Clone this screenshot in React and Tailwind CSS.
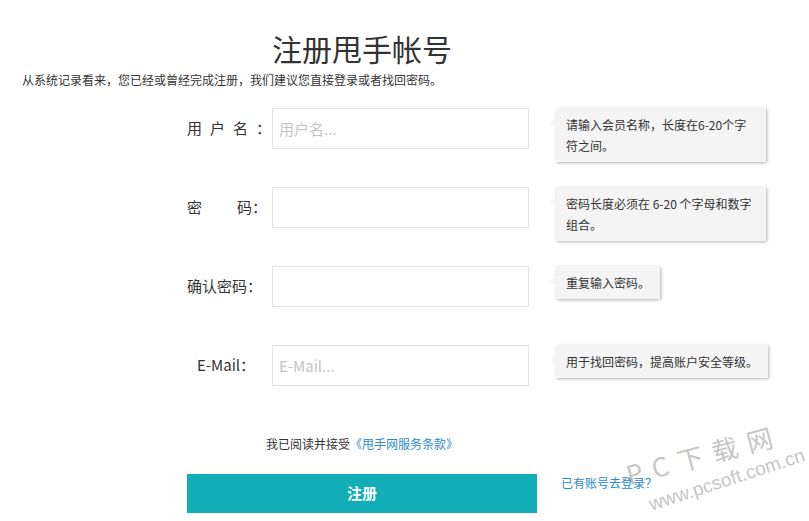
import React from 'react';

const font = { fontFamily: '"Noto Sans CJK SC", "Noto Sans", sans-serif' };

function Tip({ children, className = '' }) {
  return (
    <div className={`relative ml-[27px] bg-[#f4f4f4] px-[10px] py-[6px] text-[12px] leading-[21px] text-[#333] whitespace-nowrap shadow-[1px_1px_3px_rgba(0,0,0,0.3)] ${className}`}>
      {/* little arrow on the left */}
      <span className="absolute left-[-6px] top-[10px] h-0 w-0 border-y-[5px] border-r-[6px] border-y-transparent border-r-[#f4f4f4]" />
      {children}
    </div>
  );
}

function Row({ label, placeholder, type = 'text', tip, labelClass = '' }) {
  return (
    <div className="flex h-[41px] items-start">
      <div className={`flex h-[41px] w-[85px] items-center whitespace-nowrap text-[15px] text-[#333] ${labelClass}`}>{label}</div>
      <input
        type={type}
        placeholder={placeholder}
        className="h-[41px] w-[257px] border border-[#e3e3e3] bg-white px-[6px] text-[15px] text-[#333] outline-none placeholder:text-[#c4c4c4]"
      />
      {tip}
    </div>
  );
}

export default function App() {
  return (
    <div className="relative min-h-screen w-[809px] overflow-hidden bg-white" style={font}>
      {/* Title */}
      <div className="ml-[187px] mt-[30px] w-[350px] text-center text-[30px] leading-[36px] text-[#333]">
        注册甩手帐号
      </div>
      <p className="ml-[22px] mt-[6px] text-[12px] leading-[16px] text-[#333]">
        从系统记录看来，您已经或曾经完成注册，我们建议您直接登录或者找回密码。
      </p>

      {/* Form rows */}
      <div className="ml-[187px] mt-[20px] flex flex-col gap-[38px]">
        <Row
          label={<span className="tracking-[8px]">用户名：</span>}
          placeholder="用户名..."
          tip={<Tip className="w-[210px]">请输入会员名称，长度在6-20个字<br />符之间。</Tip>}
        />
        <Row
          label={<span><span className="mr-[35px]">密</span>码：</span>}
          type="password"
          tip={<Tip className="w-[210px]">密码长度必须在 6-20 个字母和数字<br />组合。</Tip>}
        />
        <Row
          label="确认密码："
          type="password"
          tip={<Tip>重复输入密码。</Tip>}
        />
        <Row
          label="E-Mail："
          labelClass="pl-[10px]"
          placeholder="E-Mail..."
          tip={<Tip>用于找回密码，提高账户安全等级。</Tip>}
        />
      </div>

      {/* Terms */}
      <div className="ml-[187px] mt-[50px] w-[350px] text-center text-[12px] leading-[16px] text-[#333]">
        我已阅读并接受<span className="text-[#2d8ccf]">《甩手网服务条款》</span>
      </div>

      {/* Submit */}
      <div className="ml-[187px] mt-[22px] flex items-start">
        <button className="h-[39px] w-[350px] bg-[#11aeb8] text-[15px] font-bold text-white">注册</button>
        <a className="ml-[24px] mt-[1px] text-[12px] leading-[16px] text-[#2a8bd0]">已有账号去登录？</a>
      </div>

      {/* Watermark */}
      <div className="pointer-events-none absolute left-[700px] top-[455px] -translate-x-1/2 -translate-y-1/2 rotate-[-15deg] whitespace-nowrap text-[26px] leading-[28px] tracking-[2px] text-[#b8b8b8] opacity-80">
        P C 下 载 网
      </div>
      <div
        className="pointer-events-none absolute left-[727px] top-[480px] -translate-x-1/2 -translate-y-1/2 rotate-[-18deg] whitespace-nowrap text-[19px] leading-[22px] text-[#b8b8b8] opacity-80"
        style={{ fontFamily: '"Liberation Sans", sans-serif' }}
      >
        www.pcsoft.com.cn
      </div>
    </div>
  );
}
